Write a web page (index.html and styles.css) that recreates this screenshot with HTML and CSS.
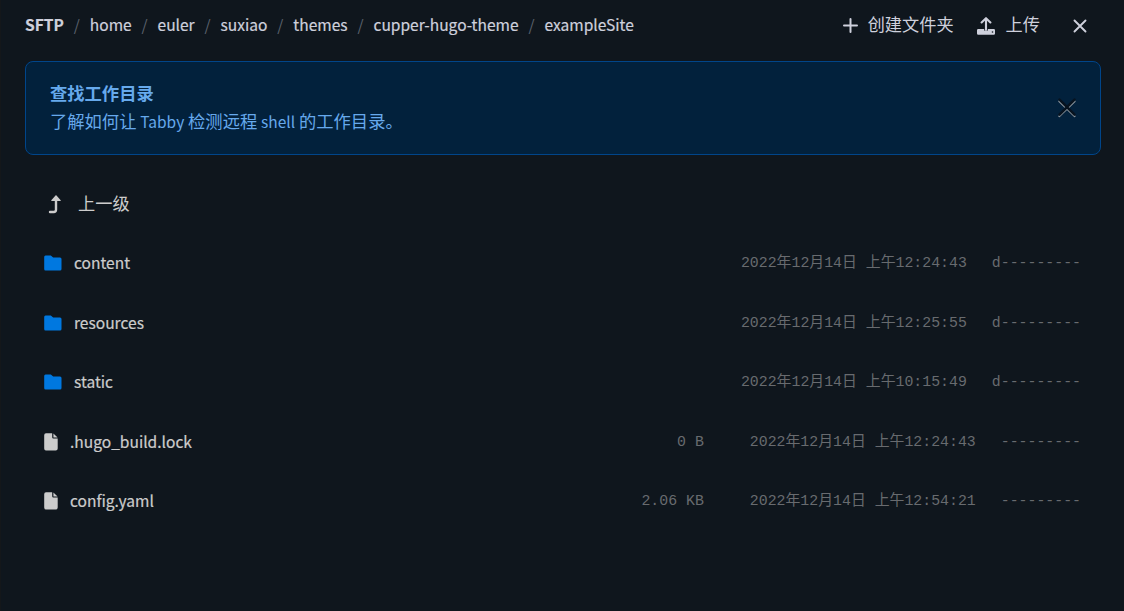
FILE: index.html
```html
<!DOCTYPE html>
<html lang="zh-CN">
<head>
<meta charset="utf-8">
<title>SFTP</title>
<link rel="stylesheet" href="styles.css">
</head>
<body>
<div class="panel">
  <header class="header">
    <nav class="crumbs">
      <strong>SFTP</strong><span>home</span><span>euler</span><span>suxiao</span><span>themes</span><span>cupper-hugo-theme</span><span>exampleSite</span>
    </nav>
    <button class="btn create"><svg width="15" height="15" viewBox="0 0 15 15"><path d="M7.500 1v13M1 7.500h13" stroke="currentColor" stroke-width="2" stroke-linecap="round"/></svg><span>创建文件夹</span></button>
    <button class="btn upload"><svg width="18" height="18" viewBox="0 0 18 18"><path d="M1.200 12h6v1.200q0 .8 1.800.8t1.800-.8V12h6q1.200 0 1.200 1.200v3.300q0 1.200-1.200 1.200H1.200Q0 17.700 0 16.500v-3.300Q0 12 1.200 12z" fill="currentColor"/><path d="M9 13V2M4.600 5.500 9 1.200l4.400 4.300" fill="none" stroke="currentColor" stroke-width="2.100" stroke-linecap="round" stroke-linejoin="round"/><circle cx="15.500" cy="15" r=".8" fill="#0f161d"/></svg><span>上传</span></button>
    <button class="btn close"><svg width="14" height="14" viewBox="0 0 14 14"><path d="M1.500 1.500l11 11M12.500 1.500l-11 11" stroke="currentColor" stroke-width="1.900" stroke-linecap="round"/></svg></button>
  </header>
  <section class="alert">
    <div class="alert-text">
      <strong>查找工作目录</strong>
      <div>了解如何让 <span class="latin">Tabby</span> 检测远程 <span class="latin">shell</span> 的工作目录。</div>
    </div>
    <svg class="dismiss" width="20" height="20" viewBox="0 0 20 20"><path d="M2.200 3.200l15.500 15M17.700 3.200l-15.500 15" stroke="#8a939b" stroke-width="1.900" stroke-linecap="round"/><path d="M2.500 1.700l15 15M17.500 1.700l-15 15" stroke="#07131f" stroke-width="2.500" stroke-linecap="round"/></svg>
  </section>
  <main class="list">
    <div class="row up"><svg width="14" height="20" viewBox="0 0 14 20"><path d="M2 18h3.800q2.200 0 2.200-2.200V5.500" fill="none" stroke="currentColor" stroke-width="2.400" stroke-linecap="round"/><path d="M8 1l4.700 5.200q.3.900-.7.900H4q-1 0-.7-.9z" fill="currentColor"/></svg><span class="label">上一级</span></div>
    <div class="row folder"><svg width="18" height="16" viewBox="0 0 18 16"><path d="M1.500.5h5.300l2.400 2H16q1.500 0 1.500 1.500v10q0 1.500-1.500 1.500H1.500Q.2 15.500.2 14V2Q.2.500 1.500.500z" fill="#0078e0"/></svg><span class="name">content</span><span class="date">2022年12月14日 上午12:24:43</span><span class="mode">d---------</span></div>
    <div class="row folder"><svg width="18" height="16" viewBox="0 0 18 16"><path d="M1.500.5h5.300l2.400 2H16q1.500 0 1.500 1.500v10q0 1.500-1.500 1.500H1.500Q.2 15.500.2 14V2Q.2.500 1.500.500z" fill="#0078e0"/></svg><span class="name">resources</span><span class="date">2022年12月14日 上午12:25:55</span><span class="mode">d---------</span></div>
    <div class="row folder"><svg width="18" height="16" viewBox="0 0 18 16"><path d="M1.500.5h5.300l2.400 2H16q1.500 0 1.500 1.500v10q0 1.500-1.500 1.500H1.500Q.2 15.500.2 14V2Q.2.500 1.500.500z" fill="#0078e0"/></svg><span class="name">static</span><span class="date">2022年12月14日 上午10:15:49</span><span class="mode">d---------</span></div>
    <div class="row file"><svg width="14" height="18" viewBox="0 0 14 18"><path d="M2 .3h6.200v4q0 1.200 1.200 1.200h4.300V15.500q0 2-2 2H2q-1.800 0-1.800-2V2.300q0-2 1.800-2zM9.400.5l4.200 4H9.400z" fill="currentColor"/></svg><span class="name">.hugo_build.lock</span><span class="size">0 B</span><span class="date">2022年12月14日 上午12:24:43</span><span class="mode">---------</span></div>
    <div class="row file"><svg width="14" height="18" viewBox="0 0 14 18"><path d="M2 .3h6.200v4q0 1.200 1.200 1.200h4.300V15.500q0 2-2 2H2q-1.800 0-1.800-2V2.300q0-2 1.800-2zM9.400.5l4.200 4H9.400z" fill="currentColor"/></svg><span class="name">config.yaml</span><span class="size">2.06 KB</span><span class="date">2022年12月14日 上午12:54:21</span><span class="mode">---------</span></div>
  </main>
</div>
</body>
</html>
```
FILE: styles.css
```css
* { box-sizing: border-box; }
body {
  margin: 0;
  background: #0f161d;
  color: #ccc;
  font: 17.2px/28px "Noto Sans CJK SC", sans-serif;
}
.panel {
  height: 611px;
  padding: 0 23px 0 24px;
  border-left: 1px solid #14171a;
  overflow: hidden;
}
.header { display: flex; align-items: center; height: 51px; color: #ced0dc; }
.crumbs { display: flex; flex: 1; padding-bottom: 3px; font-size: 15.550px; white-space: nowrap; -webkit-text-stroke: 0.2px; }
.crumbs span::before { content: "/"; color: #5a616c; margin: 0 9.900px; -webkit-text-stroke: 0; }
.btn { display: flex; align-items: center; border: 0; padding: 0; background: none; color: inherit; font: inherit; }
.btn svg { flex: none; }
.btn span { padding-bottom: 3px; }
.create { gap: 10px; }
.upload { gap: 11px; margin-left: 23px; }
.close { margin: 0 14px 0 33px; }
.alert {
  display: flex;
  align-items: center;
  justify-content: space-between;
  height: 94px;
  margin-top: 10px;
  padding: 0 23px 10px 24px;
  border: 1px solid #00458a;
  border-radius: 8px;
  background: #02213c;
  color: #66a9ec;
}
.alert-text { padding-top: 8px; font-size: 17.300px; }
.alert-text strong { display: block; }
.latin { font-size: 15.500px; }
.dismiss { margin-top: 9px; }
.list { margin-top: 19px; }
.row { display: flex; align-items: center; height: 59.500px; padding: 0 20px 0 19px; }
.up { padding-left: 23px; }
.up svg { margin-right: 16px; }
.label { padding-bottom: 2px; }
.name { flex: 1; padding-bottom: 2px; font-size: 15.550px; -webkit-text-stroke: 0.2px; }
.folder svg { margin-right: 12px; }
.file svg { margin-right: 12px; }
.size, .date, .mode {
  color: #686b6f;
  font: 14.875px/28px "Liberation Mono", "Noto Sans CJK SC", monospace;
  white-space: pre;
}
.size { margin-right: 46px; }
.date { margin-right: 25px; }
```
